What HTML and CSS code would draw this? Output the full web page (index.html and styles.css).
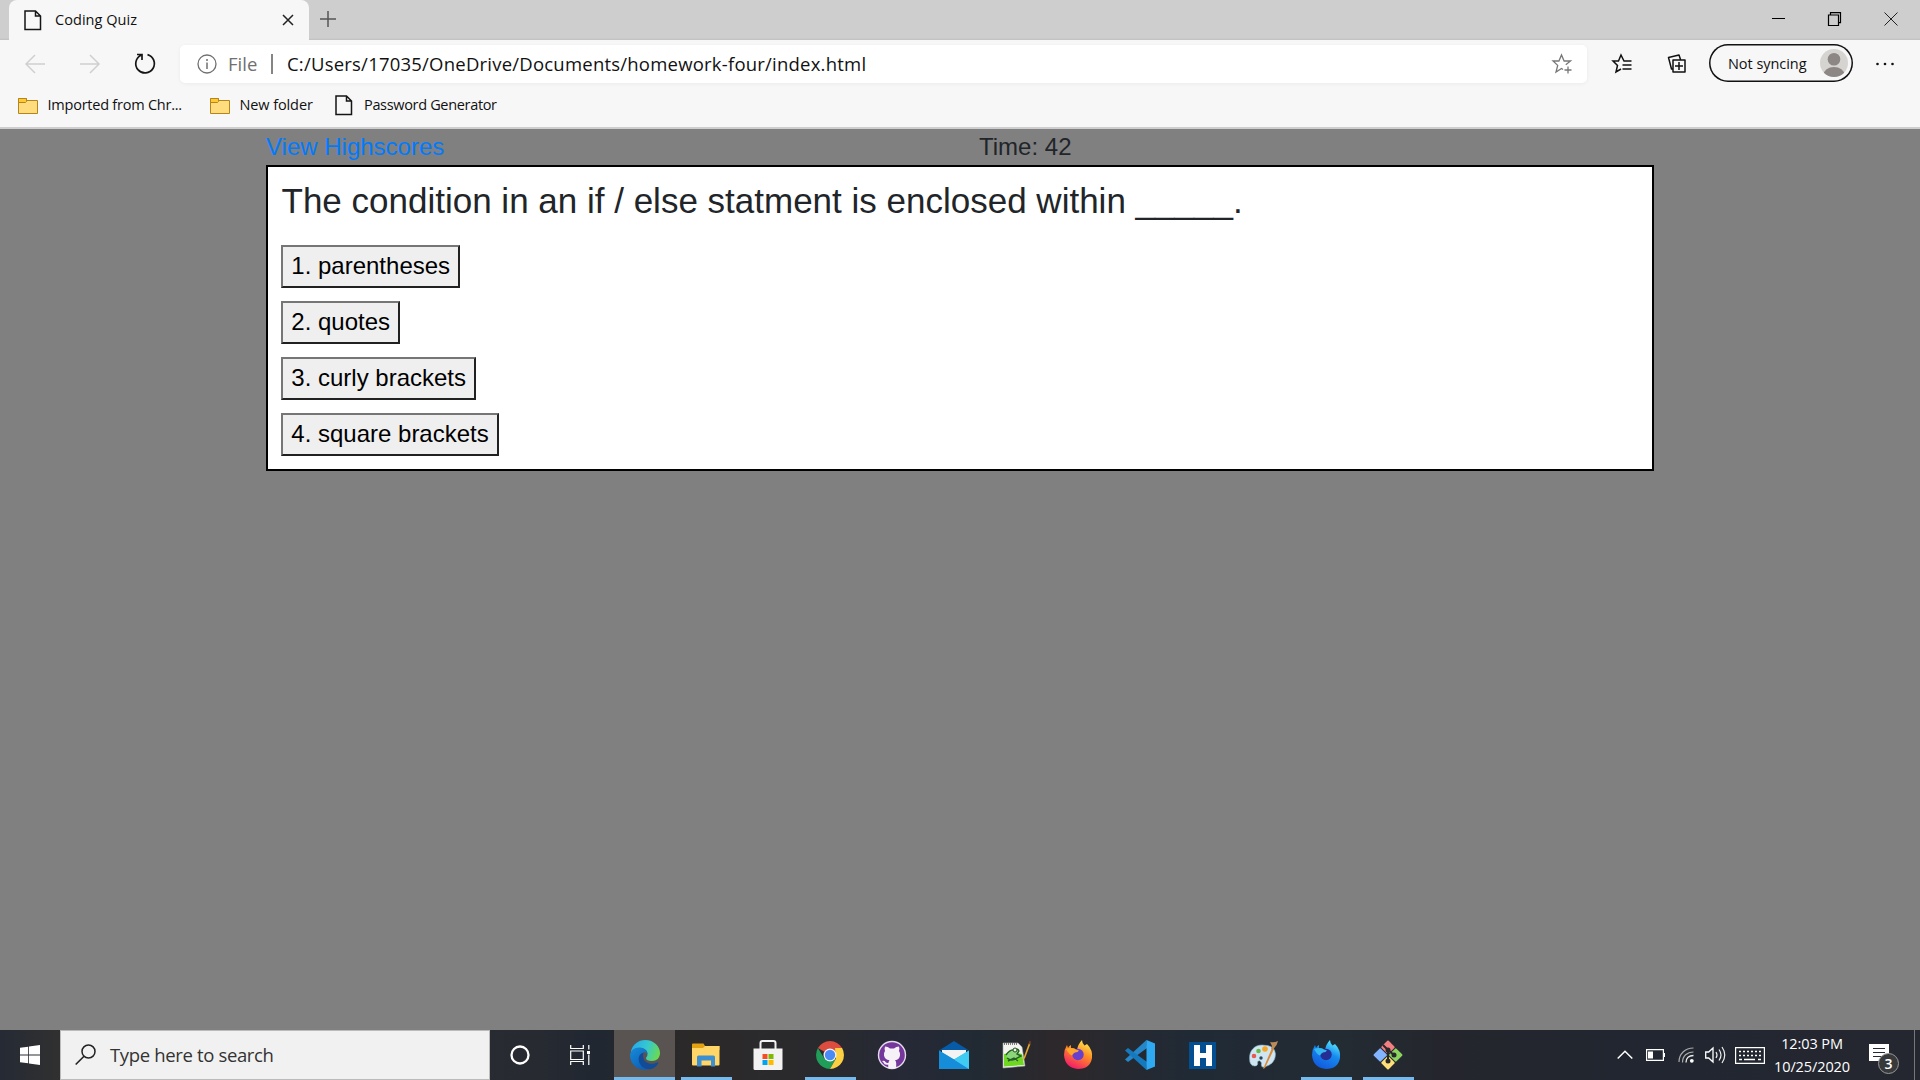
FILE: index.html
```html
<!DOCTYPE html>
<html lang="en">
<head>
<meta charset="utf-8">
<title>Coding Quiz</title>
<link rel="stylesheet" href="styles.css">
</head>
<body>
<div class="screen">
  <header class="browser">
    <div class="tabstrip">
      <div class="tab">
        <svg class="doc" width="18" height="21" viewBox="0 0 18 21"><path d="M1 1h10.500l5 5v13.500H1zM11.500 1v5h5" fill="none" stroke="#151515" stroke-width="1.500"/></svg>
        <span class="tab-title">Coding Quiz</span>
        <svg class="tab-close" width="12" height="12" viewBox="0 0 12 12"><path d="M1 1l10 10M11 1L1 11" stroke="#222" stroke-width="1.500"/></svg>
      </div>
      <svg class="newtab" width="16" height="16" viewBox="0 0 16 16"><path d="M8 0v16M0 8h16" stroke="#555" stroke-width="1.500"/></svg>
      <div class="window-controls">
        <svg width="13" height="14" viewBox="0 0 13 14"><path d="M0 6.500h13" stroke="#000"/></svg>
        <svg width="13" height="14" viewBox="0 0 13 14"><path d="M.5 3h10v10.500H.500zM2.500 3V.700h10v10h-2" fill="none" stroke="#000" stroke-width="1.200"/></svg>
        <svg width="14" height="14" viewBox="0 0 14 14"><path d="M.5.500l13 13M13.500.500l-13 13" stroke="#222"/></svg>
      </div>
    </div>
    <div class="toolbar">
      <svg class="nav" width="20" height="20" viewBox="0 0 20 20"><path d="M20 10H1M10 1L1 10l9 9" fill="none" stroke="#d0d0d0" stroke-width="1.500"/></svg>
      <svg class="nav" width="20" height="20" viewBox="0 0 20 20"><path d="M0 10h19M10 1l9 9-9 9" fill="none" stroke="#d0d0d0" stroke-width="1.500"/></svg>
      <svg class="nav" width="22" height="22" viewBox="0 0 22 22"><path d="M13.500 1.600A9.300 9.300 0 1 1 7 2.200M3 1.500h5v5.500" fill="none" stroke="#151515" stroke-width="1.700"/></svg>
      <div class="address">
        <svg width="20" height="20" viewBox="0 0 20 20"><circle cx="10" cy="10" r="9" fill="none" stroke="#707070" stroke-width="1.300"/><path d="M10 8.500V15M10 5v2" stroke="#707070" stroke-width="1.500"/></svg>
        <span class="scheme">File</span>
        <span class="divider"></span>
        <span class="url">C:/Users/17035/OneDrive/Documents/homework-four/index.html</span>
        <svg class="star" width="20" height="20" viewBox="0 0 20 20"><path d="M13.800 10.800L18.500 7h-6.400L9.500 1 6.900 7H1l4.700 4.400L4 18l5.500-3.500 1.500 1M16 12.500v7M12.500 16h7" fill="none" stroke="#777" stroke-width="1.300"/></svg>
      </div>
      <svg class="favs" width="20" height="20" viewBox="0 0 20 20"><path d="M18 7h-6L9 1 6.500 7H1l4.500 4.500L4 18l5-3M10.500 11H19.500M10.500 15H19.500M12 7h7.500" fill="none" stroke="#111" stroke-width="1.500"/></svg>
      <svg class="collections" width="20" height="20" viewBox="0 0 20 20"><path d="M6 6h12v12H6zM12 8v8M8 12h8M13.500 5.500L12 1 1.500 3.500 4.500 15H6" fill="none" stroke="#111" stroke-width="1.500" stroke-linejoin="round"/></svg>
      <div class="profile">
        <span>Not syncing</span>
        <svg width="28" height="28" viewBox="0 0 28 28"><defs><clipPath id="face"><circle cx="14" cy="14" r="14"/></clipPath></defs><circle cx="14" cy="14" r="14" fill="#d6d4d0"/><g clip-path="url(#face)" fill="#8c8784"><circle cx="14" cy="10.300" r="6.300"/><ellipse cx="14" cy="26" rx="10.500" ry="8"/></g></svg>
      </div>
      <svg class="more" width="18" height="4" viewBox="0 0 18 4"><g fill="#111"><circle cx="1.500" cy="2" r="1.300"/><circle cx="9" cy="2" r="1.300"/><circle cx="16.500" cy="2" r="1.300"/></g></svg>
    </div>
    <nav class="bookmarks">
      <div class="bookmark bm-first"><svg width="20" height="16" viewBox="0 0 20 16"><path d="M.5.500h8v2h11v13H.500z" fill="#ffdc7d" stroke="#b5851b"/><path d="M.5.500h8V3.500L7.500 4.500H.500z" fill="#fdc935" stroke="#b5851b"/></svg><span>Imported from Chr...</span></div>
      <div class="bookmark bm-second"><svg width="20" height="16" viewBox="0 0 20 16"><path d="M.5.500h8v2h11v13H.500z" fill="#ffdc7d" stroke="#b5851b"/><path d="M.5.500h8V3.500L7.500 4.500H.500z" fill="#fdc935" stroke="#b5851b"/></svg><span>New folder</span></div>
      <div class="bookmark bm-third"><svg width="18" height="21" viewBox="0 0 18 21"><path d="M1 1h10.500l5 5v13.500H1zM11.500 1v5h5" fill="none" stroke="#151515" stroke-width="1.500"/></svg><span>Password Generator</span></div>
    </nav>
  </header>

  <main class="page">
    <div class="container">
      <div class="status"><a class="scores" href="#">View Highscores</a><span class="timer">Time: 42</span></div>
      <section class="quiz">
        <h3 class="question">The condition in an if / else statment is enclosed within _____.</h3>
        <div class="answers">
          <button class="answer">1. parentheses</button>
          <button class="answer">2. quotes</button>
          <button class="answer">3. curly brackets</button>
          <button class="answer">4. square brackets</button>
        </div>
      </section>
    </div>
  </main>

  <footer class="taskbar">
    <div class="start"><svg width="20" height="20" viewBox="0 0 20 20"><path d="M0 2.800l8.200-1.100v7.900H0zM9 1.600L20 0v9.600H9zM0 10.400h8.200v7.900L0 17.200zM9 10.400h11V20L9 18.400z" fill="#fff"/></svg></div>
    <div class="search">
      <svg width="21" height="21" viewBox="0 0 21 21"><circle cx="13.500" cy="7.500" r="6.500" fill="none" stroke="#222" stroke-width="1.500"/><path d="M9 12.200L.7 20.500" stroke="#222" stroke-width="1.600"/></svg>
      <span>Type here to search</span>
    </div>
    <div class="apps">
      <div class="app"><svg width="20" height="20" viewBox="0 0 20 20"><circle cx="10" cy="10" r="8.500" fill="none" stroke="#fff" stroke-width="2.300"/></svg></div>
      <div class="app"><svg width="21" height="20" viewBox="0 0 21 20"><path d="M.7 0v3.500h12.600V0M.7 6h12.600v8.500H.700zM.7 20v-3.500h12.600V20M18.800 0v4.500M18.800 9.500V20" fill="none" stroke="#fff" stroke-width="1.200"/><path d="M17 6h3v3h-3z" fill="#fff"/></svg></div>
      <div class="app active open"><svg width="30" height="30" viewBox="0 0 30 30"><defs><linearGradient id="eTop" x1="0" y1=".3" x2="1" y2=".6"><stop offset="0" stop-color="#27a9e8"/><stop offset=".5" stop-color="#34c8d2"/><stop offset="1" stop-color="#6bdb4e"/></linearGradient><linearGradient id="eSide" x1="0" y1="0" x2=".6" y2="1"><stop offset="0" stop-color="#178bd8"/><stop offset="1" stop-color="#0c62b8"/></linearGradient></defs><path d="M1 11C3 4 8.500 0 15 0c9 0 15 6.500 15 13 0 5-3.500 8-8 8-4 0-6-1.500-6-2.800 0-1 1.500-1.200 1.500-4.200 0-3.500-3-6-7-6-4.500 0-8 2-9.500 5z" fill="url(#eTop)"/><path d="M0 15C.5 10 5 7 10 7.500c4.500.500 7.500 3.500 7.500 6.500-1-1.200-2.300-1.800-3.500-1.800-2.500 1-4 3.800-4 7 0 5 4 9 8 10.300C8 31.500 0 24 0 15z" fill="url(#eSide)"/><path d="M13.500 12.500c-5 1.500-6 7-3.500 11.500 3.500 6 10.500 6.500 14.500 3.500 1.700-1.200 3-2.800 3.700-4.200.300-.800-.300-1.200-1-.8-6 3-12 .500-13.500-3.500-.8-2.200-.8-4.500-.2-6.500z" fill="#124b98"/></svg></div>
      <div class="app open"><svg width="28" height="24" viewBox="0 0 28 24"><path d="M0 1.500Q0 .5 1 .5h10.500l1.500 2.500h14.500v4H0z" fill="#e4a111"/><path d="M0 5h11l2-2h14.500v18.500q0 1-1 1H1q-1 0-1-1z" fill="#ffd667"/><path d="M5 23.500V14q0-1.500 1.500-1.500h15Q23 12.500 23 14v9.500h-4v-6H9.500v6z" fill="#3c8fd0"/></svg></div>
      <div class="app"><svg width="30" height="30" viewBox="0 0 30 30"><path d="M7.500 9V3q0-2 2-2h11q2 0 2 2v6" fill="none" stroke="#f2f2f2" stroke-width="2"/><path d="M.5 8.500h29v20q0 1.500-1.500 1.500H2Q.5 30 .5 28.500z" fill="#f2f2f2"/><path d="M9.500 14h5v5h-5z" fill="#f25022"/><path d="M15.500 14h5v5h-5z" fill="#7fba00"/><path d="M9.500 20h5v5h-5z" fill="#00a4ef"/><path d="M15.500 20h5v5h-5z" fill="#ffb900"/></svg></div>
      <div class="app open"><svg width="28" height="28" viewBox="0 0 28 28"><path d="M14 14L1.900 7A14 14 0 0 1 26.100 7z" fill="#dc4c3f"/><path d="M1.900 7A14 14 0 0 0 14 28l6-10.500-6 2L8 17z" fill="#1f9d59"/><path d="M26.100 7A14 14 0 0 1 14 28l6-10.500L19 7z" fill="#fdcf42"/><circle cx="14" cy="14" r="6.500" fill="#f4f4f4"/><circle cx="14" cy="14" r="5.200" fill="#4a8af4"/></svg></div>
      <div class="app"><svg width="30" height="30" viewBox="0 0 30 30"><circle cx="15" cy="15" r="13.500" fill="#75379c" stroke="#e4dcea" stroke-width="1.400"/><path d="M8 6.500q3 0 5 2h4q2-2 5-2 .8 2.500 0 4.500Q23.500 13 23 15.500q-.5 4-5 4.800 1.200 1 1.200 3V28q-4 1.200-8 0v-3.300q-4 .8-4.700-2.200L5 21q2.500-.8 3.700 1.200 1.300 1.300 2.800.500.200-1.500 1-2.400-4.800-.7-5.500-4.800Q6.500 13 8 11 7.200 9 8 6.500z" fill="#f5f1f7"/></svg></div>
      <div class="app"><svg width="30" height="28" viewBox="0 0 30 28"><path d="M0 9.500L15 0l15 9.500z" fill="#075aa5"/><path d="M3 9h24v9H3z" fill="#f3f3f3"/><path d="M0 9.500l15 9L30 9.500V28H0z" fill="#29b5ef"/><path d="M0 9.500l15 9L30 28H0z" fill="#168dd9"/><path d="M15 18.500L30 9.500V28z" fill="#40cbf3"/></svg></div>
      <div class="app"><svg width="29" height="28" viewBox="0 0 29 28"><path d="M1 2h15l4 4 3 19-22 2z" fill="#f4f5ef" stroke="#aaa" stroke-width=".6"/><path d="M2 13q9-2 18 0l2 11-20 1.500z" fill="#6ed720"/><path d="M4 14q4-6 9-5 3-2 4 1l-2 3 4 2-4 2q-5 4-10 0M6 20l6-3 4 3" fill="#8bd67a" stroke="#245f25" stroke-width="1.400"/><circle cx="13" cy="9" r="2" fill="#e9f8dd" stroke="#264b28"/><path d="M2 3h14" stroke="#555" stroke-width="1.500" stroke-dasharray="1 1"/><path d="M21 20l.8-4L27 2l1.500.7-5.300 14z" fill="#e8a82b"/><path d="M26.500 3l1-3 1.500.5-1 3z" fill="#8b3d2c"/></svg></div>
      <div class="app"><svg width="30" height="30" viewBox="0 0 30 30"><defs><linearGradient id="fox" x1=".8" y1="0" x2=".3" y2="1"><stop offset="0" stop-color="#fff14f"/><stop offset=".45" stop-color="#ff8b25"/><stop offset="1" stop-color="#f3166e"/></linearGradient></defs><path d="M1 15Q.8 10 4 5l1 3q1-2 3-3v3q4 0 6 2 1-6 5-10 0 3 2.500 5.500L24 4q6 6 5 14-2 11-14 11Q2 28 1 15z" fill="url(#fox)"/><circle cx="15" cy="14.500" r="5.700" fill="#6840ce"/><path d="M3 9q5-2 10 .5l3 1q-1 2-4 2-2 1-3 3-3-1-6-6.500z" fill="#ffa52b"/></svg></div>
      <div class="app"><svg width="30" height="30" viewBox="0 0 30 30"><path d="M22 8L3 22l-3-2.500L21.500 0z" fill="#2587c9"/><path d="M22 22L3 8 0 10.500 21.500 30z" fill="#1579bd"/><path d="M21.500 0L30 3.500v23L21.500 30z" fill="#2faaf2"/></svg></div>
      <div class="app"><svg width="27" height="27" viewBox="0 0 27 27"><path d="M0 0h27v27H0z" fill="#034f92"/><path d="M5 3h6v8h6V3h6v21h-6v-8h-6v8H5z" fill="#fff"/></svg></div>
      <div class="app"><svg width="30" height="28" viewBox="0 0 30 28"><path d="M13 4C5 4 .5 10 .5 17q0 8 5 8 4 0 3-4 2-3 4 1-1 5 3 4 11-3 11-13Q26 4 13 4z" fill="#cfe6f2" stroke="#86a9bd" stroke-width=".6"/><circle cx="5" cy="15" r="2.300" fill="#e65a50"/><circle cx="9.500" cy="10" r="2.300" fill="#67b943"/><circle cx="16" cy="8" r="2.800" fill="#f6a623"/><circle cx="12" cy="17" r="1.700" fill="#27465d"/><path d="M14 28l9-21 2 1-9 19z" fill="#dc8937"/><path d="M22 8l1-3-2-4q4 1 8-1-1 4-3 6l-2 3z" fill="#bd8b59"/></svg></div>
      <div class="app open"><svg width="30" height="30" viewBox="0 0 30 30"><defs><linearGradient id="devfox" x1=".8" y1="0" x2=".3" y2="1"><stop offset="0" stop-color="#62f3ff"/><stop offset=".45" stop-color="#168aef"/><stop offset="1" stop-color="#1258dc"/></linearGradient></defs><path d="M1 15Q.8 10 4 5l1 3q1-2 3-3v3q4 0 6 2 1-6 5-10 0 3 2.500 5.500L24 4q6 6 5 14-2 11-14 11Q2 28 1 15z" fill="url(#devfox)"/><circle cx="15" cy="14.500" r="5.700" fill="#242e93"/><path d="M3 9q5-2 10 .5l3 1q-1 2-4 2-2 1-3 3-3-1-6-6.500z" fill="#35b7f2"/></svg></div>
      <div class="app open"><svg width="30" height="30" viewBox="0 0 30 30"><g transform="rotate(45 15 15)"><rect x="4.500" y="4.500" width="10" height="10" rx="1" fill="#f47f80"/><rect x="15.500" y="4.500" width="10" height="10" rx="1" fill="#8cd35f"/><rect x="4.500" y="15.500" width="10" height="10" rx="1" fill="#83b4ff"/><rect x="15.500" y="15.500" width="10" height="10" rx="1" fill="#ffdf78"/></g><path d="M10 5l5 5v12M15 10l6 5" fill="none" stroke="#27292d" stroke-width="2"/><g fill="#27292d"><circle cx="15" cy="10" r="2.500"/><circle cx="21" cy="15" r="2.500"/><circle cx="15" cy="21" r="2.500"/></g></svg></div>
    </div>
    <div class="tray">
      <svg width="16" height="10" viewBox="0 0 16 10"><path d="M.7 8.500L8 1.200l7.300 7.300" fill="none" stroke="#fff" stroke-width="1.500"/></svg>
      <svg width="19" height="12" viewBox="0 0 19 12"><path d="M.6.600h16.800v10.800H.6zM18.400 4v4" fill="none" stroke="#fff" stroke-width="1.200"/><path d="M2 2.500h5v7H2z" fill="#fff"/></svg>
      <svg width="16" height="16" viewBox="0 0 16 16"><g fill="none" stroke="#aaa" stroke-width="1.200"><path d="M1 15C1 7 7 1 15.500 1"/><path d="M4.500 15.500C4.500 9 9 5 15.500 5"/></g><path d="M8 15.500C8 11 11 8.500 15.500 8.500" fill="none" stroke="#eee" stroke-width="1.300"/><circle cx="13.800" cy="13.800" r="1.900" fill="#fff"/></svg>
      <svg width="21" height="18" viewBox="0 0 21 18"><path d="M.7 6h3L8 2v14l-4.300-4h-3z" fill="none" stroke="#fff" stroke-width="1.300"/><path d="M11 6q2 3 0 6M14 3.500q4 5.500 0 11M17 1q5.500 8 0 16" fill="none" stroke="#eee" stroke-width="1.200"/></svg>
      <svg width="30" height="17" viewBox="0 0 30 17"><path d="M.6.600h28.800v15.800H.6z" fill="none" stroke="#fff" stroke-width="1.200"/><path d="M4 4.500h22M4 8.500h22" stroke="#fff" stroke-width="1.300" stroke-dasharray="2 2"/><path d="M4 12.500h3M9 12.500h11M23 12.500h3" stroke="#fff" stroke-width="1.300"/></svg>
      <div class="clock"><span class="hour">12:03 PM</span><span class="date">10/25/2020</span></div>
      <div class="notices"><svg width="20" height="22" viewBox="0 0 20 22"><path d="M0 0h20v17h-5l-5 5v-5H0z" fill="#fff"/><path d="M4 4.500h12M4 8.500h12M4 12.500h12" stroke="#252831" stroke-width="1.200"/></svg><span class="badge">3</span></div>
      <div class="peek"></div>
    </div>
  </footer>
</div>
</body>
</html>
```

FILE: styles.css
```css
* { box-sizing: border-box; }
body { margin: 0; font-family: "Open Sans", "Noto Sans", sans-serif; }
svg { display: block; flex: none; overflow: visible; }
.screen { width: 1920px; height: 1080px; display: flex; flex-direction: column; overflow: hidden; background: #808080; }
.browser { height: 129px; flex: none; background: #f7f7f7; border-bottom: 2px solid #cecece; color: #111; white-space: nowrap; }
.tabstrip { height: 40px; display: flex; align-items: center; padding-left: 9px; background: linear-gradient(#cecece 38px, #bfbfbf); }
.tab { width: 300px; height: 40px; display: flex; align-items: center; padding: 0 15px; background: #f7f7f7; border-radius: 8px 8px 0 0; }
.tab-title { margin-left: 13px; padding-bottom: 2px; font-size: 14.5px; letter-spacing: .05px; flex: 1; }
.newtab { margin-left: 11px; margin-top: -2px; }
.window-controls { display: flex; margin-left: auto; padding-right: 22px; gap: 43px; align-items: center; margin-top: -3px; }
.toolbar { height: 47px; display: flex; align-items: center; padding: 0 24px 0 25px; }
.nav { margin-right: 35px; }
.nav + .nav { margin-right: 34px; }
.nav + .nav + .nav { margin-right: 24px; }
.address { width: 1407px; height: 38px; display: flex; align-items: center; padding: 0 15px 0 17px; background: #fff; border-radius: 5px; box-shadow: 0 1px 4px #0000000d; font-size: 18.5px; }
.scheme { margin-left: 11px; color: #707070; width: 32px; }
.divider { width: 2px; height: 20px; margin: 0 14px 0 11px; background: #858585; }
.url { flex: 1; letter-spacing: .22px; }
.favs { margin-left: 25px; }
.collections { margin-left: 35px; }
.profile { width: 144px; height: 38px; margin-left: 22px; margin-top: -1px; border-radius: 19px; box-shadow: inset 0 0 0 1.5px #111; display: flex; align-items: center; justify-content: space-between; padding: 0 5px 0 19px; font-size: 14.5px; letter-spacing: -.05px; }
.more { margin-left: 23px; }
.bookmarks { height: 37px; display: flex; align-items: center; padding-left: 18px; font-size: 14.5px; letter-spacing: -.23px; }
.bookmark { display: flex; align-items: center; gap: 9.5px; }
.bookmark span { padding-bottom: 2px; }
.bm-first { width: 192px; }
.bm-second { width: 125px; letter-spacing: -.1px; }
.bm-third { gap: 11px; letter-spacing: -.33px; }

.page { flex: 1; display: flex; justify-content: center; font-family: "Liberation Sans", Arial, sans-serif; color: #212529; }
.container { width: 1388px; }
.status { height: 36px; display: grid; grid-template-columns: 1fr 1fr; column-gap: 38px; font-size: 24px; line-height: 36px; }
.scores { color: #007bff; text-decoration: none; }
.quiz { height: 306px; border: 2px solid #000; background: #fff; padding: 13px; }
.question { margin: 0 0 23px; padding-left: .5px; font-size: 35px; line-height: 42px; font-weight: 400; }
.answers { display: flex; flex-direction: column; align-items: flex-start; gap: 13px; }
.answer { height: 43px; padding: 0 8.3px 2px; border: 2px solid; border-color: #767676 #212121 #212121 #767676; border-radius: 0; background: #efefef; color: #000; font: 24px/36px "Liberation Sans", Arial, sans-serif; }

.taskbar { height: 50px; flex: none; display: flex; background: linear-gradient(90deg, #252a34, #303030 3%, #272a31 28%, #202731 31%, #2c2929 36%, #292a2e 43%, #262936 47%, #212a33 51%, #2d282b 55%, #202a35 62%, #232b33 70%, #25262d 75%, #212630 85%, #252730); }
.start { width: 60px; display: grid; place-items: center; }
.search { width: 430px; display: flex; align-items: center; gap: 14px; padding-left: 14px; border: 1px solid #bbb; background: #f1f1f1; color: #333; font-size: 18.5px; letter-spacing: -.35px; white-space: nowrap; }
.search svg { margin-top: -1px; }
.search span { padding-bottom: 2px; }
.apps { display: flex; }
.app { width: 62px; height: 50px; display: grid; place-items: center; }
.app:first-child { width: 60px; }
.app:nth-child(2) { width: 61px; padding-right: 1px; }
.app:nth-child(3) { width: 61px; margin-left: 3px; }
.open { background: linear-gradient(#76b9ed, #76b9ed) center bottom / 51px 3px no-repeat; }
.active { background: linear-gradient(#76b9ed, #76b9ed) center bottom / 61px 3px no-repeat, #595452; }
.tray { margin-left: auto; display: flex; align-items: center; color: #fff; }
.tray > svg:nth-child(2) { margin-left: 13px; }
.tray > svg:nth-child(3) { margin-left: 13px; }
.tray > svg:nth-child(4) { margin-left: 11px; }
.tray > svg:nth-child(5) { margin-left: 9px; }
.clock { width: 94px; margin-right: 2px; text-align: center; font-size: 14.5px; letter-spacing: -.1px; line-height: 23px; display: flex; flex-direction: column; }
.notices { position: relative; width: 53px; padding-left: 8px; }
.badge { position: absolute; left: 17px; top: 9px; width: 21px; height: 21px; border: 1px solid #999; border-radius: 50%; background: #38393b; font-size: 14px; line-height: 19px; font-weight: 600; text-align: center; }
.peek { width: 6px; height: 50px; border-left: 1px solid #777; }
```
